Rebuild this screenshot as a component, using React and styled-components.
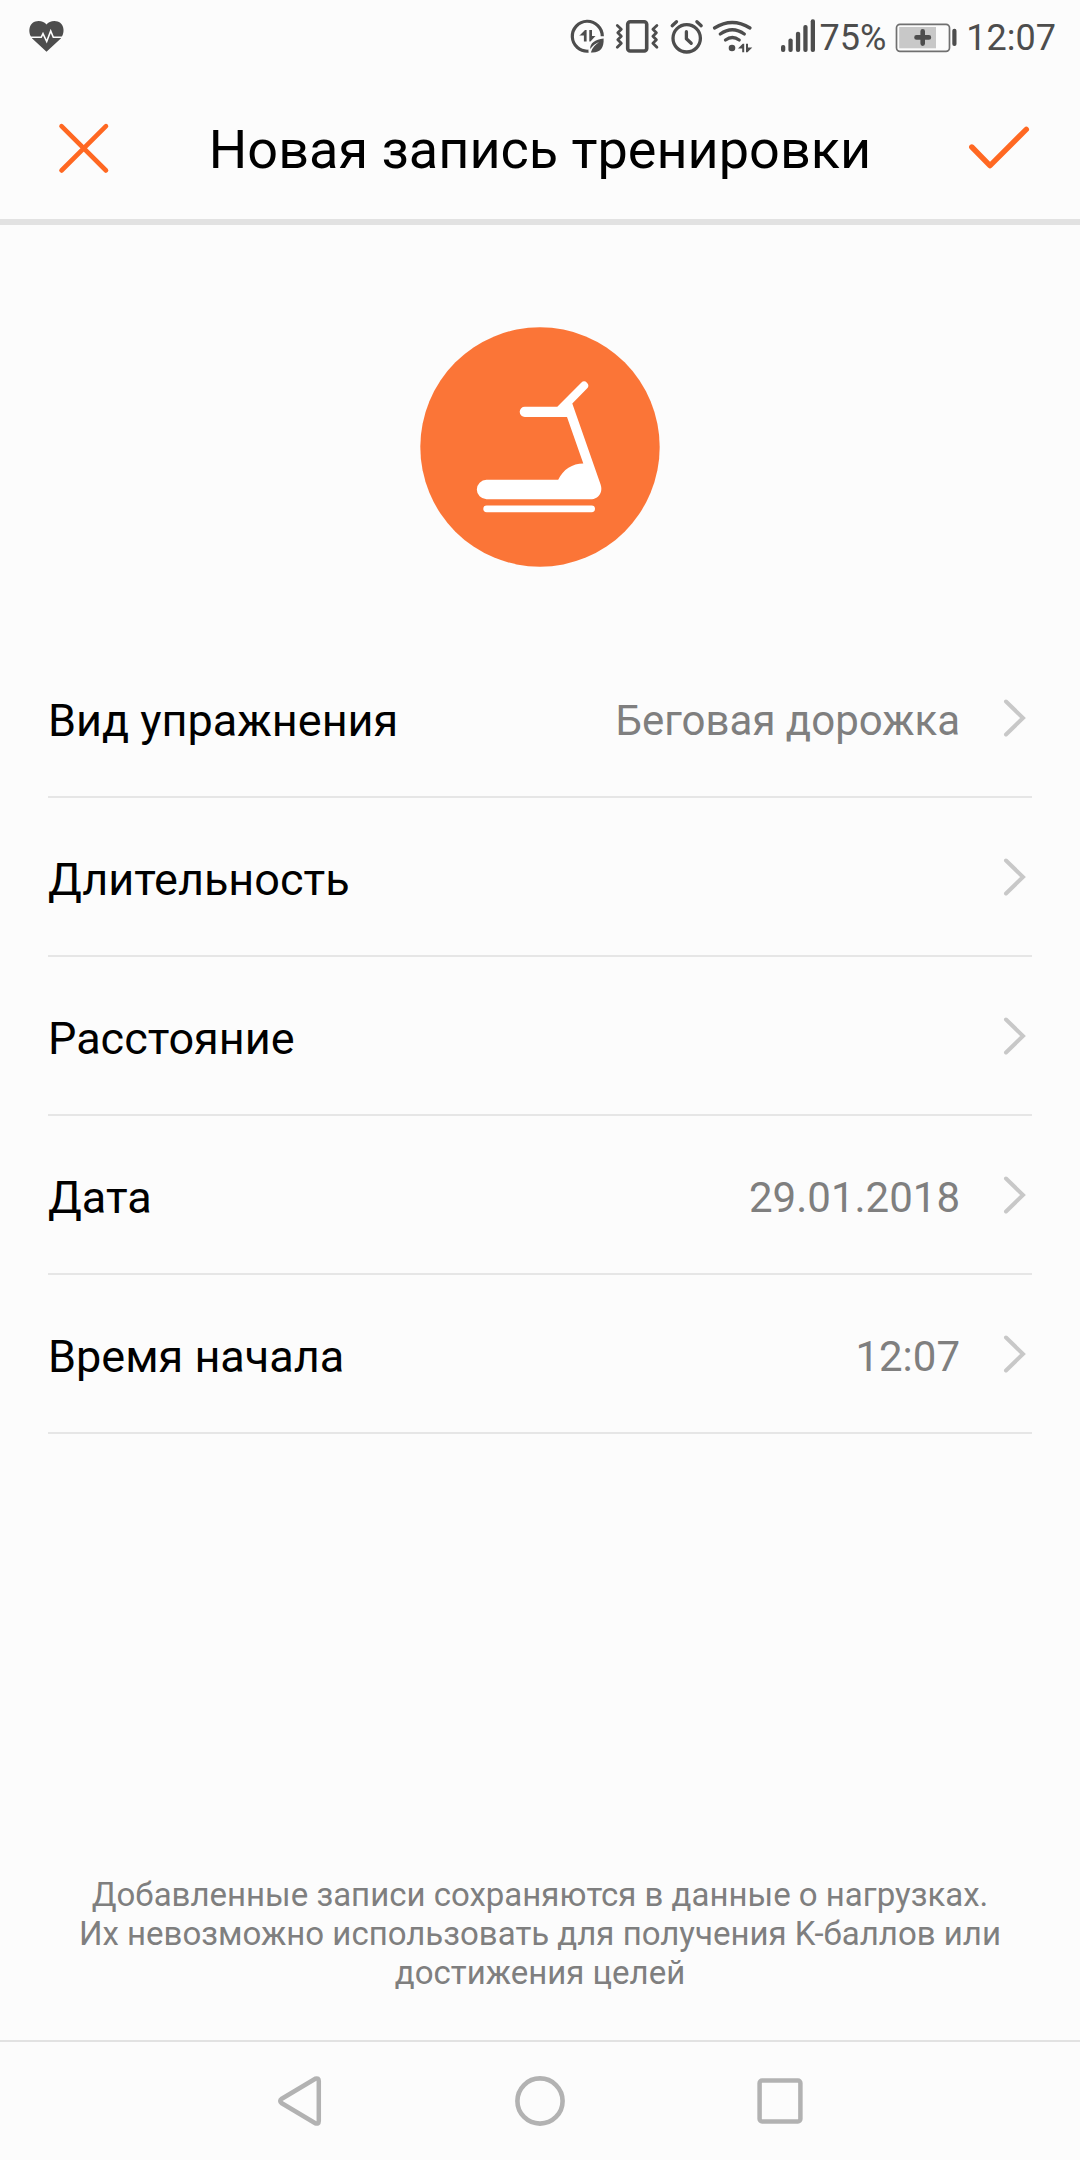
import React from 'react'
import styled, { createGlobalStyle } from 'styled-components'

const GlobalStyle = createGlobalStyle`
*{
    box-sizing:border-box;
}
body{
    margin:0;
    background:#fcfcfc;
    font-family:Roboto, "Noto Sans", sans-serif;
}
`;
const Page = styled.div`
display:flex;
flex-direction:column;
min-height:100vh;
background:#fcfcfc;
`;
const Icon = styled.svg`
display:block;
flex:none;
width:${({ $w }) => $w}px;
height:${({ $h }) => $h}px;
`;
const IconButton = styled.button`
display:flex;
align-items:center;
justify-content:center;
padding:0;
border:0;
background:transparent;
color:${({ $color }) => $color};
cursor:pointer;
`;

const StatusBar = styled.div`
display:flex;
align-items:center;
justify-content:space-between;
height:72px;
padding:0 24px;
color:#4d4d4d;
`;
const StatusGroup = styled.div`
display:flex;
align-items:center;
`;
const StatusIcons = styled(StatusGroup)`
margin-right:16px;
`;
const StatusText = styled.span`
padding-top:4px;
font-size:36px;
line-height:40px;
`;
const BatteryBox = styled.div`
padding:0 8px;
`;

const Header = styled.header`
display:flex;
align-items:center;
height:153px;
padding:4px 48px 0;
border-bottom:6px solid #e2e2e2;
`;
const Title = styled.h1`
flex:1;
margin:0;
padding-top:4px;
font-size:54px;
font-weight:400;
line-height:64px;
text-align:center;
color:#000;
`;

const Main = styled.main`
display:flex;
flex:1;
flex-direction:column;
`;
const Badge = styled.div`
display:flex;
justify-content:center;
padding:102px 0 72px;
`;
const Rows = styled.ul`
margin:0;
padding:0 48px;
list-style:none;
`;
const RowItem = styled.li`
border-bottom:2px solid #e6e6e6;
`;
const RowButton = styled.button`
display:flex;
align-items:center;
width:100%;
height:157px;
padding:0;
border:0;
background:transparent;
font-family:inherit;
text-align:left;
cursor:pointer;
`;
const RowLabel = styled.span`
flex:1;
padding-top:6px;
font-size:45px;
line-height:54px;
color:#000;
`;
const RowValue = styled.span`
padding-top:6px;
margin-right:40px;
font-size:42px;
line-height:54px;
color:#7f7f7f;
`;
const Note = styled.p`
margin:auto 0 0;
padding:48px 72px;
font-size:33px;
line-height:39px;
text-align:center;
color:#7f7f7f;
`;

const NavBar = styled.nav`
display:grid;
grid-template-columns:repeat(3,1fr);
height:120px;
padding:0 180px;
border-top:2px solid #e2e2e2;
`;

const HeartIcon = () => (
    <Icon $w={48} $h={48} viewBox="0 0 48 48" fill="none">
        <path fill="currentColor" d="M22.5 39.8L8.2 26.4C3 20 5 9 14.6 9c3.400 0 6.200 1.300 7.900 3.500C24.200 10.300 27 9 30.400 9 40 9 42 20 36.800 26.400z" />
        <path stroke="#fcfcfc" strokeWidth="1.6" d="M5 25.300H17.200L19 21.700 22.700 29.500 26.700 19 29.300 25.300H40" />
    </Icon>
)
const DataSaverIcon = () => (
    <Icon $w={48} $h={48} viewBox="0 0 48 48" fill="none">
        <path stroke="currentColor" strokeWidth="3.2" d="M24.500 39.200A15 15 0 1 1 38.300 24.300" />
        <path fill="currentColor" d="M15 24l6-6h1.600v11.500h-2.700V23.600H15zM25.300 18H28v5.900h3.500l-5 5.600h-1.200z" />
        <path fill="currentColor" d="M39.600 26.600C31 28 26 31 26.200 37c2.500-3.500 5.300-5.500 9-7-3.700 2.500-6.700 5.500-8.400 10.500 9 .8 13.400-4 12.800-13.900z" />
    </Icon>
)
const VibrateIcon = () => (
    <Icon $w={48} $h={48} viewBox="0 0 48 48" fill="none" stroke="currentColor" strokeLinecap="round" strokeLinejoin="round">
        <rect x="15.700" y="9.700" width="19" height="29.300" rx="2.500" strokeWidth="3.600" />
        <path strokeWidth="2.800" d="M5.300 13.500l4 3.700-3.500 3.500 3.500 3.500-3.500 3.500 3.500 3.500-4 4M44.900 13.500l-4 3.700 3.500 3.500-3.500 3.500 3.500 3.500-3.500 3.500 4 4" />
    </Icon>
)
const AlarmIcon = () => (
    <Icon $w={48} $h={48} viewBox="0 0 48 48" fill="none" stroke="currentColor" strokeLinecap="round" strokeLinejoin="round" strokeWidth="3.300">
        <circle cx="26.700" cy="26.300" r="13.700" />
        <path d="M12.200 13.700l4.300-4M36.900 9.700l4.300 4" />
        <path d="M26.400 19.700v7l4.800 4.600" />
    </Icon>
)
const WifiIcon = () => (
    <Icon $w={48} $h={48} viewBox="0 0 48 48" fill="none">
        <path stroke="currentColor" strokeWidth="3.300" strokeLinecap="round" d="M6.500 16Q24.200 5 42 16M12.300 22Q24.300 13.500 36.300 22M17.500 28Q24.300 23 31.200 28" />
        <circle cx="24" cy="36" r="3.300" fill="currentColor" />
        <path fill="currentColor" d="M30 36.500l4.700-4.700h1.500v8.500h-2v-3.800zM38 31.800h2v3.700h4.300l-4.800 4.800H38z" />
    </Icon>
)
const SignalIcon = () => (
    <Icon $w={48} $h={48} viewBox="0 0 48 48" fill="currentColor">
        <rect x="9" y="33" width="4.300" height="7" rx="2" />
        <rect x="16.400" y="26.600" width="4.300" height="13.400" rx="2" />
        <rect x="23.900" y="19.700" width="4.300" height="20.300" rx="2" />
        <rect x="31.300" y="13" width="4.300" height="27" rx="2" />
        <rect x="38.700" y="7.200" width="4.300" height="32.800" rx="2" />
    </Icon>
)
const BatteryIcon = () => (
    <Icon $w={64} $h={48} viewBox="0 0 64 48" fill="none">
        <rect x="2.500" y="12.300" width="53" height="27" rx="3.500" stroke="#707070" strokeWidth="1.700" />
        <rect x="5.200" y="15" width="36.800" height="21.300" fill="#c8c8c8" />
        <path stroke="currentColor" strokeWidth="4.600" strokeLinecap="round" d="M28.700 19.200v12.400M22.500 25.400h12.400" />
        <rect x="58.300" y="16.700" width="4.200" height="17.300" rx="2" fill="currentColor" />
    </Icon>
)
const CloseIcon = () => (
    <Icon $w={72} $h={72} viewBox="0 0 72 72" fill="none" stroke="currentColor" strokeWidth="4.600" strokeLinecap="round">
        <path d="M13.500 14.200L58 58.500M58 14.200L13.500 58.500" />
    </Icon>
)
const CheckIcon = () => (
    <Icon $w={72} $h={72} viewBox="0 0 72 72" fill="none" stroke="currentColor" strokeWidth="5.400" strokeLinecap="round" strokeLinejoin="round">
        <path d="M11.800 35L30 53.600 66.300 17.400" />
    </Icon>
)
const ChevronIcon = () => (
    <Icon $w={32} $h={40} viewBox="0 0 32 40" fill="none" stroke="#c8c8c8" strokeWidth="4" strokeLinecap="round">
        <path d="M6 3.500L23 20 6 36.500" />
    </Icon>
)
const TreadmillIcon = () => (
    <Icon $w={240} $h={240} viewBox="0 0 240 240" role="img" aria-label="Беговая дорожка">
        <circle cx="120" cy="120" r="119.700" fill="#fb7537" />
        <path fill="#fff" d="M104.800 79.700H137.300L161.200 55.800A3.900 3.900 0 0 1 167 61.500L152.300 76.400 180.600 157.500C183.500 166 177.500 172.200 172 172.200H66.500A9.700 9.700 0 0 1 66.500 152.800H138.200C143 142.500 152.500 136.500 163.300 136.500L147 89.900H104.800A5.100 5.100 0 0 1 104.800 79.700z" />
        <rect x="63.300" y="178.400" width="111.700" height="6.800" rx="3.400" fill="#fff" />
    </Icon>
)
const BackIcon = () => (
    <Icon $w={60} $h={60} viewBox="0 0 60 60" fill="none" stroke="currentColor" strokeWidth="4.500" strokeLinejoin="round">
        <path d="M45.300 7.700L11.800 27.700Q8.600 30 11.800 32.300L45.300 52.300Q48.800 53.500 48.800 50V10Q48.800 6.500 45.300 7.700z" />
    </Icon>
)
const HomeIcon = () => (
    <Icon $w={60} $h={60} viewBox="0 0 60 60" fill="none" stroke="currentColor" strokeWidth="4.600">
        <circle cx="30" cy="30" r="22.600" />
    </Icon>
)
const RecentIcon = () => (
    <Icon $w={60} $h={60} viewBox="0 0 60 60" fill="none" stroke="currentColor" strokeWidth="4.500">
        <rect x="9.600" y="9.600" width="40.800" height="40.800" rx="2.500" />
    </Icon>
)

const rowData = [
    { label: 'Вид упражнения', value: 'Беговая дорожка' },
    { label: 'Длительность' },
    { label: 'Расстояние' },
    { label: 'Дата', value: '29.01.2018' },
    { label: 'Время начала', value: '12:07' },
];

const App = () => {
    return (
        <Page>
            <GlobalStyle />
            <StatusBar>
                <HeartIcon />
                <StatusGroup>
                    <StatusIcons>
                        <DataSaverIcon />
                        <VibrateIcon />
                        <AlarmIcon />
                        <WifiIcon />
                    </StatusIcons>
                    <SignalIcon />
                    <StatusText>75%</StatusText>
                    <BatteryBox>
                        <BatteryIcon />
                    </BatteryBox>
                    <StatusText>12:07</StatusText>
                </StatusGroup>
            </StatusBar>
            <Header>
                <IconButton $color="#ff6822" aria-label="Отмена">
                    <CloseIcon />
                </IconButton>
                <Title>Новая запись тренировки</Title>
                <IconButton $color="#ff6822" aria-label="Сохранить">
                    <CheckIcon />
                </IconButton>
            </Header>
            <Main>
                <Badge>
                    <TreadmillIcon />
                </Badge>
                <Rows>
                    {rowData.map((item) => (
                        <RowItem key={item.label}>
                            <RowButton>
                                <RowLabel>{item.label}</RowLabel>
                                {item.value && <RowValue>{item.value}</RowValue>}
                                <ChevronIcon />
                            </RowButton>
                        </RowItem>
                    ))}
                </Rows>
                <Note>
                    Добавленные записи сохраняются в данные о нагрузках. Их невозможно использовать для получения K-баллов или достижения целей
                </Note>
            </Main>
            <NavBar>
                <IconButton $color="#b2b2b2" aria-label="Назад">
                    <BackIcon />
                </IconButton>
                <IconButton $color="#b2b2b2" aria-label="Домой">
                    <HomeIcon />
                </IconButton>
                <IconButton $color="#b2b2b2" aria-label="Недавние">
                    <RecentIcon />
                </IconButton>
            </NavBar>
        </Page>
    )
}

export default App
